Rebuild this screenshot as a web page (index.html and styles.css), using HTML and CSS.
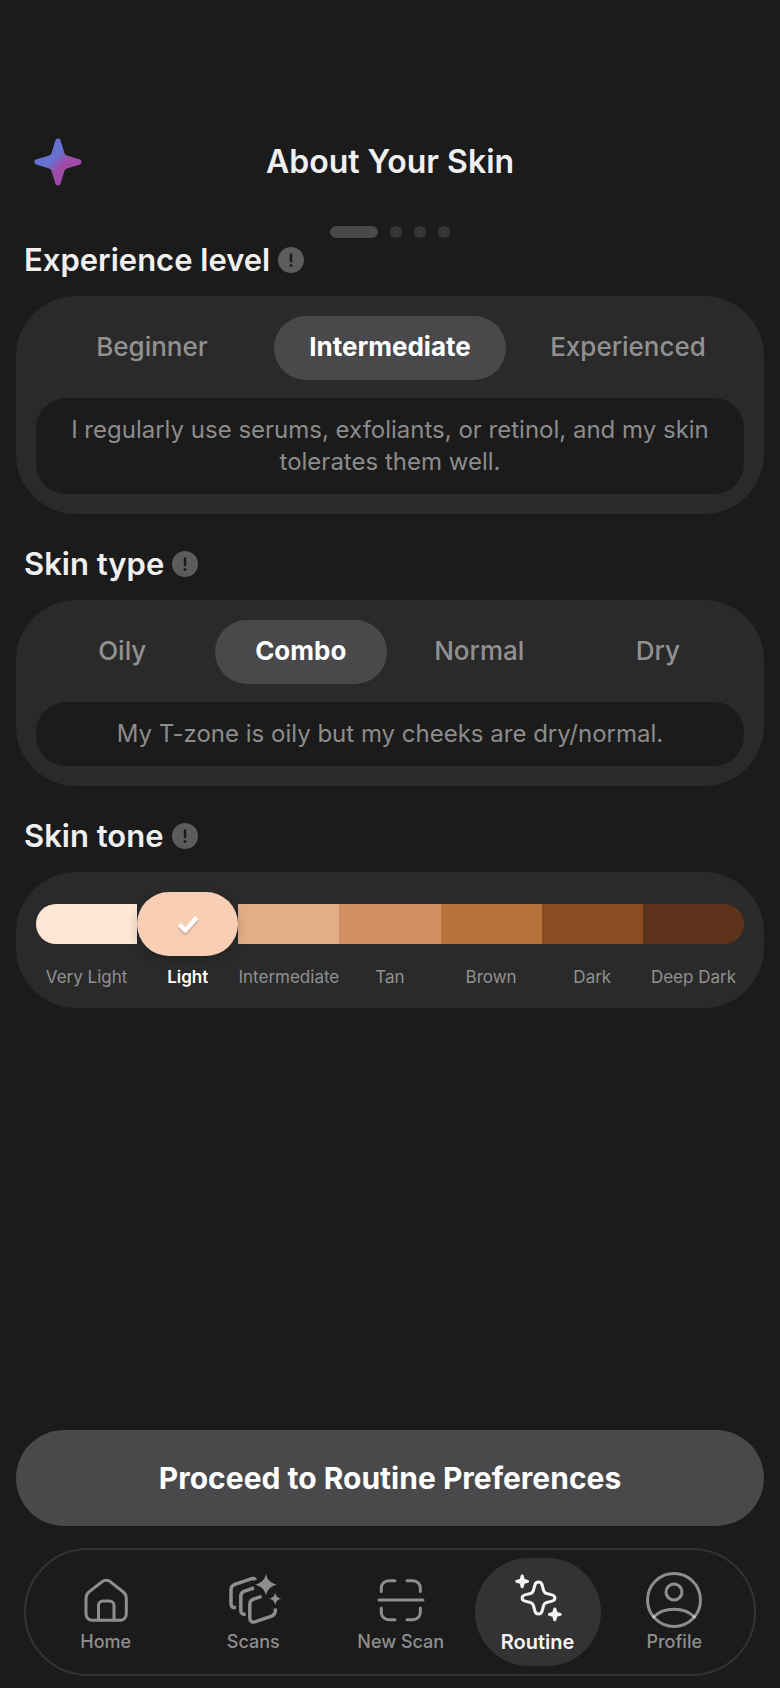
FILE: index.html
```html
<!DOCTYPE html>
<html lang="en">
<head>
    <meta charset="UTF-8">
    <meta name="viewport" content="width=device-width, initial-scale=1.0">
    <title>About Your Skin</title>
    <link rel="stylesheet" href="styles.css">
</head>
<body>
    <header class="header">
        <svg class="logo" viewBox="0 0 48 48" aria-hidden="true">
            <defs>
                <linearGradient id="logoFill" x1="0" y1="0" x2="1" y2="1">
                    <stop offset="0.42" stop-color="#6672cf"/>
                    <stop offset="0.58" stop-color="#a14ba9"/>
                </linearGradient>
            </defs>
            <path fill="url(#logoFill)" d="M24 .5c1.6 0 2.3.8 2.7 2.2l3.6 11.7c.5 1.8 1.5 2.8 3.3 3.3l11.7 3.6c1.4.4 2.2 1.1 2.2 2.7s-.8 2.3-2.2 2.7l-11.7 3.6c-1.8.5-2.8 1.5-3.3 3.3l-3.6 11.7c-.4 1.4-1.1 2.2-2.7 2.2s-2.3-.8-2.7-2.2l-3.6-11.7c-.5-1.8-1.5-2.8-3.3-3.3L2.7 26.7C1.3 26.3.5 25.6.5 24s.8-2.3 2.2-2.7l11.7-3.6c1.8-.5 2.8-1.5 3.3-3.3l3.6-11.7C21.7 1.3 22.4.5 24 .5z"/>
        </svg>
        <h1>About Your Skin</h1>
    </header>

    <div class="steps">
        <span class="step active"></span>
        <span class="step"></span>
        <span class="step"></span>
        <span class="step"></span>
    </div>

    <main>
        <section>
            <div class="section-title">
                <h2>Experience level</h2>
                <button type="button" class="info" aria-label="About experience level">
                    <svg viewBox="0 0 26 26"><path d="M13 7.5V14"/><circle cx="13" cy="18.5" r="1.5"/></svg>
                </button>
            </div>
            <div class="card">
                <div class="options three">
                    <button type="button">Beginner</button>
                    <button type="button" class="selected">Intermediate</button>
                    <button type="button">Experienced</button>
                </div>
                <p class="hint">I regularly use serums, exfoliants, or retinol, and my skin tolerates them well.</p>
            </div>
        </section>

        <section>
            <div class="section-title">
                <h2>Skin type</h2>
                <button type="button" class="info" aria-label="About skin type">
                    <svg viewBox="0 0 26 26"><path d="M13 7.5V14"/><circle cx="13" cy="18.5" r="1.5"/></svg>
                </button>
            </div>
            <div class="card">
                <div class="options four">
                    <button type="button">Oily</button>
                    <button type="button" class="selected">Combo</button>
                    <button type="button">Normal</button>
                    <button type="button">Dry</button>
                </div>
                <p class="hint">My T-zone is oily but my cheeks are dry/normal.</p>
            </div>
        </section>

        <section>
            <div class="section-title">
                <h2>Skin tone</h2>
                <button type="button" class="info" aria-label="About skin tone">
                    <svg viewBox="0 0 26 26"><path d="M13 7.5V14"/><circle cx="13" cy="18.5" r="1.5"/></svg>
                </button>
            </div>
            <div class="card tones">
                <button type="button" class="tone very-light"><span class="swatch"></span>Very Light</button>
                <button type="button" class="tone light selected">
                    <span class="swatch">
                        <svg class="check" viewBox="0 0 24 24"><path d="M4 12.5l5.5 5.5L20 6"/></svg>
                    </span>Light
                </button>
                <button type="button" class="tone intermediate"><span class="swatch"></span>Intermediate</button>
                <button type="button" class="tone tan"><span class="swatch"></span>Tan</button>
                <button type="button" class="tone brown"><span class="swatch"></span>Brown</button>
                <button type="button" class="tone dark"><span class="swatch"></span>Dark</button>
                <button type="button" class="tone deep-dark"><span class="swatch"></span>Deep Dark</button>
            </div>
        </section>
    </main>

    <button type="button" class="proceed">Proceed to Routine Preferences</button>

    <nav class="tabbar">
        <a href="#home">
            <svg viewBox="0 0 56 56">
                <path d="M8 26.500c0-3 1-5 3-6.600L24 9.800c3-2.100 5.500-2.100 8.500 0L45.300 20c2 1.600 3 3.600 3 6.500V42a6.300 6.300 0 0 1-6.300 6.300H14.300A6.300 6.300 0 0 1 8 42z"/>
                <path d="M20.500 48V33.500a4.500 4.500 0 0 1 4.500-4.500h6.500a4.500 4.500 0 0 1 4.500 4.500V48"/>
            </svg>
            Home
        </a>
        <a href="#scans">
            <svg class="layers" viewBox="0 0 56 56">
                <path d="M30.500 8c-.8-1.500-2.300-1.800-4.300-1.200L10.500 12.200C7.500 13.200 6 15 6 18v13.500c0 3 1.500 4.500 5 4"/>
                <path d="M29 16l-9.500 3.200c-2.500.9-3.700 2.500-3.700 5V38c0 3.200 1.600 4.800 4.900 4.300"/>
                <path d="M36.500 24.300l-8 2.900c-2.500.9-3.700 2.500-3.700 5V45.500c0 4 2.200 5.300 5.700 4.200l15.500-5.400c2.900-1 4.300-2.900 4.300-5.500v-2.300"/>
                <path class="solid" d="M41 1.800c1.200 6 4.500 9.300 10.800 10.900-6.300 1.500-9.600 4.900-10.800 11-1.200-6.100-4.500-9.500-10.800-11C36.500 11.100 39.800 7.800 41 1.800zM50.200 20.700c.7 3.400 2.500 5.200 6 6-3.500.9-5.300 2.700-6 6.200-.7-3.500-2.500-5.300-6-6.200 3.500-.8 5.300-2.600 6-6z"/>
            </svg>
            Scans
        </a>
        <a href="#new-scan">
            <svg viewBox="0 0 56 56">
                <path d="M8.300 19.500V16a7.300 7.300 0 0 1 7.300-7.300H22M34 8.700h6a7.300 7.300 0 0 1 7.300 7.300v3.500M8.300 36v4.400a7.300 7.300 0 0 0 7.300 7.300H22M34 47.700h6a7.300 7.300 0 0 0 7.300-7.300V36"/>
                <path d="M6 28h44"/>
            </svg>
            New Scan
        </a>
        <a href="#routine" class="current">
            <svg viewBox="0 0 56 56">
                <path d="M28.500 10c2 0 3.100 1.100 3.600 3l1.500 5.500c.5 1.800 1.200 2.500 3 3l5.400 1.400c1.900.5 2.900 1.300 2.900 3.100s-1 2.600-2.900 3.100l-5.400 1.400c-1.800.5-2.500 1.200-3 3L32.100 39c-.5 1.900-1.600 3-3.600 3s-3.100-1.100-3.600-3l-1.500-5.500c-.5-1.800-1.200-2.500-3-3L15 29.100c-1.900-.5-2.900-1.300-2.900-3.100s1-2.600 2.900-3.100l5.400-1.400c1.800-.5 2.500-1.200 3-3l1.500-5.500c.5-1.900 1.600-3 3.600-3z"/>
                <path d="M12.200 4l1.200 4.200 4.200 1.200-4.200 1.200-1.200 4.200-1.200-4.200-4.200-1.200L11 8.200z"/>
                <path d="M44.800 37l1.200 4.200 4.200 1.200-4.200 1.200-1.200 4.200-1.200-4.200-4.200-1.200 4.200-1.200z"/>
            </svg>
            Routine
        </a>
        <a href="#profile">
            <svg viewBox="0 0 56 56">
                <circle cx="28" cy="28" r="26.500"/>
                <circle cx="28" cy="20" r="8"/>
                <path class="fade" d="M7.500 45c10-10.500 31-10.500 41 0"/>
            </svg>
            Profile
        </a>
    </nav>
</body>
</html>
```

FILE: styles.css
```css
* {
    box-sizing: border-box;
}
body {
    margin: 0;
    padding: 128px 16px 12px;
    min-height: 100vh;
    display: flex;
    flex-direction: column;
    font-family: Inter, "Liberation Sans", sans-serif;
    background-color: #1b1b1b;
    color: #f0f0f0;
}
button {
    border: none;
    padding: 0;
    background: none;
    font-family: inherit;
    color: inherit;
    cursor: pointer;
}
h1, h2, p {
    margin: 0;
}
.header {
    display: grid;
    grid-template-columns: 48px 1fr 48px;
    align-items: center;
    height: 68px;
    padding: 0 18px;
}
.logo {
    width: 48px;
    height: 48px;
}
h1 {
    font-size: 32px;
    line-height: 40px;
    font-weight: 600;
    text-align: center;
}
.steps {
    display: flex;
    justify-content: center;
    gap: 12px;
    margin: 30px 0 2px;
}
.step {
    width: 12px;
    height: 12px;
    border-radius: 6px;
    background-color: #363636;
}
.step.active {
    width: 48px;
    background-color: #49494b;
}
main {
    display: flex;
    flex-direction: column;
    gap: 30px;
    margin-bottom: auto;
}
.section-title {
    display: flex;
    align-items: center;
    gap: 8px;
    padding: 0 8px;
    margin-bottom: 16px;
}
h2 {
    font-size: 31px;
    line-height: 40px;
    font-weight: 600;
}
.info {
    width: 26px;
    height: 26px;
    border-radius: 50%;
    background-color: #5c5c5c;
}
.info svg {
    display: block;
    width: 26px;
    height: 26px;
    fill: #1b1b1b;
    stroke-linecap: round;
}
.info path {
    stroke: #1b1b1b;
    stroke-width: 2.5;
}
.card {
    padding: 20px;
    border-radius: 60px;
    background-color: #2a2a2a;
}
.options {
    display: grid;
    gap: 6px;
    margin-bottom: 18px;
}
.options.three {
    grid-template-columns: repeat(3, 1fr);
}
.options.four {
    grid-template-columns: repeat(4, 1fr);
}
.options button {
    height: 64px;
    padding-bottom: 4px;
    border-radius: 32px;
    font-size: 26px;
    font-weight: 500;
    color: #919191;
}
.options .selected {
    background-color: #49494b;
    color: #fff;
    font-weight: 700;
}
.hint {
    padding: 16px 28px;
    border-radius: 30px;
    background-color: #1b1b1b;
    color: #8c8c8c;
    font-size: 24px;
    line-height: 32px;
    text-align: center;
}
.tones {
    display: grid;
    grid-template-columns: repeat(7, 1fr);
}
.tone {
    display: flex;
    flex-direction: column;
    align-items: center;
    gap: 22px;
    padding-top: 12px;
    font-size: 17px;
    line-height: 22px;
    color: #919191;
    white-space: nowrap;
}
.swatch {
    width: 100%;
    height: 40px;
}
.very-light .swatch {
    border-radius: 20px 0 0 20px;
    background-color: #ffe6d5;
}
.light .swatch {
    background-color: #f8cfb5;
}
.intermediate .swatch {
    background-color: #e3ae87;
}
.tan .swatch {
    background-color: #d38f62;
}
.brown .swatch {
    background-color: #b8733b;
}
.dark .swatch {
    background-color: #8b4c24;
}
.deep-dark .swatch {
    border-radius: 0 20px 20px 0;
    background-color: #5d321b;
}
.tone.selected {
    z-index: 1;
    gap: 10px;
    padding-top: 0;
    color: #fff;
    font-weight: 600;
}
.selected .swatch {
    display: flex;
    align-items: center;
    justify-content: center;
    height: 64px;
    border-radius: 32px;
    box-shadow: 0 4px 12px rgba(0, 0, 0, 0.2);
}
.check {
    width: 26px;
    height: 26px;
    fill: none;
    stroke: #fff;
    stroke-width: 4;
    stroke-linejoin: round;
    filter: drop-shadow(0 2px 1px rgba(0, 0, 0, 0.2));
}
.proceed {
    height: 96px;
    border-radius: 48px;
    background-color: #49494b;
    color: #fff;
    font-size: 30px;
    font-weight: 700;
}
.tabbar {
    display: grid;
    grid-template-columns: repeat(3, 1fr) 126px 1fr;
    margin: 22px 8px 0;
    padding: 8px 6px;
    border: 2px solid #333;
    border-radius: 64px;
}
.tabbar a {
    display: flex;
    flex-direction: column;
    align-items: center;
    height: 108px;
    padding-top: 14px;
    border-radius: 54px;
    color: #8e8e8e;
    font-size: 18px;
    line-height: 28px;
    font-weight: 500;
    text-decoration: none;
}
.tabbar svg {
    width: 56px;
    height: 56px;
    fill: none;
    stroke: #8e8e8e;
    stroke-width: 3;
    stroke-linecap: round;
    stroke-linejoin: round;
    overflow: visible;
}
.tabbar .layers {
    stroke-width: 3.5;
    stroke-linecap: butt;
}
.tabbar .solid {
    fill: #8e8e8e;
    stroke: none;
}
.tabbar .fade {
    stroke: rgba(255, 255, 255, 0.5);
}
.tabbar .current {
    background-color: #333;
    color: #f5f5f5;
    font-size: 20px;
    font-weight: 600;
}
.tabbar .current svg {
    stroke: #f5f5f5;
}
```
